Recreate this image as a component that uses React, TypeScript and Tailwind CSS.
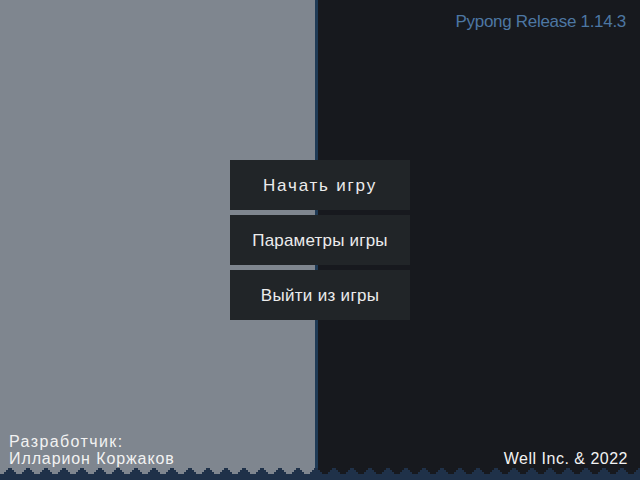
import React from "react";

const font = { fontFamily: '"Liberation Sans", Arial, sans-serif' };

function Zigzag() {
  const parts: string[] = [];
  for (let k = -1; k < 37; k++) {
    const c = 10 + 18 * k;
    parts.push(`M${c - 2} 0h4v2h-4z`);
    parts.push(`M${c - 4} 2h8v2h-8z`);
    parts.push(`M${c - 6} 4h12v2h-12z`);
  }
  parts.push("M0 6h640v6h-640z");
  return (
    <svg width="640" height="12" viewBox="0 0 640 12" className="block" shapeRendering="crispEdges">
      <path d={parts.join("")} fill="#1f3149" />
    </svg>
  );
}

function MenuButton({ label, tracking }: { label: string; tracking: string }) {
  return (
    <button
      className={`flex h-[50px] w-[180px] items-center justify-center bg-[#212528] text-[17px] leading-none text-[#ececec] ${tracking}`}
      style={font}
    >
      {label}
    </button>
  );
}

export default function App() {
  return (
    <div className="relative h-[480px] w-[640px] overflow-hidden" style={font}>
      <div className="absolute inset-0 flex">
        <div className="w-[315px] bg-[#7f868f]" />
        <div className="w-[3px] bg-[#1f3a55]" />
        <div className="flex-1 bg-[#17191e]" />
      </div>
      <div className="absolute bottom-0 left-0">
        <Zigzag />
      </div>
      <div className="relative grid h-full grid-rows-[1fr_auto_1fr]">
        <div className="flex justify-end pr-[14px] pt-[13px]">
          <span className="text-[17px] leading-none tracking-[-0.3px] text-[#4d77a3]">Pypong Release 1.14.3</span>
        </div>
        <div className="flex flex-col items-center gap-[5px]">
          <MenuButton label="Начать игру" tracking="tracking-[1.8px]" />
          <MenuButton label="Параметры игры" tracking="tracking-[0.2px]" />
          <MenuButton label="Выйти из игры" tracking="tracking-[0.3px]" />
        </div>
        <div className="flex items-end justify-between pb-[13px] pl-[9px] pr-[12px]">
          <div className="flex flex-col text-[16px] leading-[17px] text-[#f2f2f2]">
            <span className="block tracking-[1.4px]">Разработчик:</span>
            <span className="block tracking-[0.9px]">Илларион Коржаков</span>
          </div>
          <span className="block text-[16px] leading-[17px] tracking-[0.5px] text-[#f2f2f2]">Well Inc. &amp; 2022</span>
        </div>
      </div>
    </div>
  );
}
